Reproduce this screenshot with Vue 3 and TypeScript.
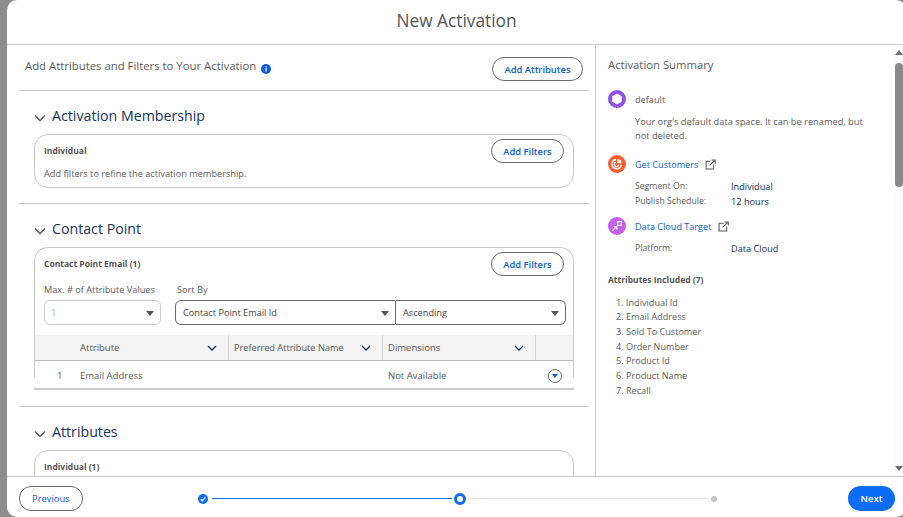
<script setup lang="ts">
const attributes: string[] = [
  'Individual Id',
  'Email Address',
  'Sold To Customer',
  'Order Number',
  'Product Id',
  'Product Name',
  'Recall',
]
</script>

<template>
  <div class="backdrop">
    <div class="modal">
      <header class="modal-header">New Activation</header>

      <div class="modal-body">
        <main class="main">
          <div class="intro">
            <div class="intro-title">
              Add Attributes and Filters to Your Activation
              <svg class="info" viewBox="0 0 10 10" width="10" height="10">
                <circle cx="5" cy="5" r="5" fill="#0b5cd5" />
                <rect x="4.4" y="4.2" width="1.3" height="3.4" fill="#fff" />
                <rect x="4.4" y="2.3" width="1.3" height="1.2" fill="#fff" />
              </svg>
            </div>
            <button class="btn add-attrs">Add Attributes</button>
          </div>

          <section class="section">
            <h2 class="section-title">
              <svg class="chev" viewBox="0 0 12 8" width="12" height="8">
                <path d="M1 1.5 6 6.5 11 1.5" fill="none" stroke="#555" stroke-width="1.3" />
              </svg>
              Activation Membership
            </h2>
            <div class="card">
              <div class="card-head">
                <span class="card-title">Individual</span>
                <button class="btn">Add Filters</button>
              </div>
              <p class="card-note">Add filters to refine the activation membership.</p>
            </div>
          </section>

          <section class="section contact">
            <h2 class="section-title">
              <svg class="chev" viewBox="0 0 12 8" width="12" height="8">
                <path d="M1 1.5 6 6.5 11 1.5" fill="none" stroke="#555" stroke-width="1.3" />
              </svg>
              Contact Point
            </h2>
            <div class="card card-table">
              <div class="card-head">
                <span class="card-title">Contact Point Email (1)</span>
                <button class="btn">Add Filters</button>
              </div>
              <div class="fields">
                <div class="field max-field">
                  <label>Max. # of Attribute Values</label>
                  <div class="select disabled">1<i class="caret"></i></div>
                </div>
                <div class="field sort-field">
                  <label>Sort By</label>
                  <div class="select-pair">
                    <div class="select left">Contact Point Email Id<i class="caret"></i></div>
                    <div class="select right">Ascending<i class="caret"></i></div>
                  </div>
                </div>
              </div>
              <div class="table">
                <div class="thead">
                  <div class="th th-num"></div>
                  <div class="th th-attr">
                    Attribute
                    <svg viewBox="0 0 10 6" width="10" height="6"><path d="M1 1 5 5 9 1" fill="none" stroke="#16325c" stroke-width="1.3" /></svg>
                  </div>
                  <div class="th th-pref">
                    <span class="pref-label">Preferred Attribute Name</span>
                    <svg viewBox="0 0 10 6" width="10" height="6"><path d="M1 1 5 5 9 1" fill="none" stroke="#16325c" stroke-width="1.3" /></svg>
                  </div>
                  <div class="th th-dim">
                    Dimensions
                    <svg viewBox="0 0 10 6" width="10" height="6"><path d="M1 1 5 5 9 1" fill="none" stroke="#16325c" stroke-width="1.3" /></svg>
                  </div>
                  <div class="th th-act"></div>
                </div>
                <div class="tr">
                  <div class="td th-num">1</div>
                  <div class="td th-attr">Email Address</div>
                  <div class="td th-pref"></div>
                  <div class="td th-dim">Not Available</div>
                  <div class="td th-act">
                    <span class="row-menu"><i></i></span>
                  </div>
                </div>
              </div>
            </div>
          </section>

          <section class="section attrs">
            <h2 class="section-title">
              <svg class="chev" viewBox="0 0 12 8" width="12" height="8">
                <path d="M1 1.5 6 6.5 11 1.5" fill="none" stroke="#555" stroke-width="1.3" />
              </svg>
              Attributes
            </h2>
            <div class="card">
              <div class="card-head">
                <span class="card-title">Individual (1)</span>
              </div>
            </div>
          </section>
        </main>

        <aside class="summary">
          <div class="summary-inner">
            <h3 class="summary-title">Activation Summary</h3>

            <div class="item-head">
              <span class="badge purple">
                <svg viewBox="0 0 18 18" width="18" height="18">
                  <path d="M9 3.5 13.8 6.25V11.75L9 14.5 4.2 11.75V6.25Z" fill="#fff" />
                </svg>
              </span>
              <span class="plain">default</span>
            </div>
            <p class="item-text">Your org's default data space. It can be renamed, but not deleted.</p>

            <div class="item-head second">
              <span class="badge orange">
                <svg viewBox="0 0 18 18" width="18" height="18">
                  <path d="M8 4.6a4.6 4.6 0 1 0 5.2 5.4" fill="none" stroke="#fff" stroke-width="1.5" />
                  <path d="M8 7a2.3 2.3 0 1 0 2.8 2.6" fill="none" stroke="#fff" stroke-width="1.2" />
                  <path d="M9.4 4v4.2h4.2A4.3 4.3 0 0 0 9.4 4Z" fill="#fff" />
                </svg>
              </span>
              <a class="link">Get Customers</a>
              <svg class="ext" viewBox="0 0 12 12" width="11" height="11">
                <path d="M6 2.5H1.2v8.3h8.3V6" fill="none" stroke="#555" stroke-width="1.1" />
                <path d="M5 7 10.6 1.4M7.2 1h4v4" fill="none" stroke="#555" stroke-width="1.1" />
              </svg>
            </div>
            <dl class="meta">
              <dt>Segment On:</dt><dd>Individual</dd>
              <dt>Publish Schedule:</dt><dd>12 hours</dd>
            </dl>

            <div class="item-head third">
              <span class="badge violet">
                <svg viewBox="0 0 18 18" width="18" height="18">
                  <rect x="9.6" y="4.6" width="3.8" height="3.8" fill="none" stroke="#fff" stroke-width="1.2" />
                  <path d="M4.4 13.6 8.6 9.4M5.8 9.6h3v3" fill="none" stroke="#fff" stroke-width="1.3" />
                </svg>
              </span>
              <a class="link">Data Cloud Target</a>
              <svg class="ext" viewBox="0 0 12 12" width="11" height="11">
                <path d="M6 2.5H1.2v8.3h8.3V6" fill="none" stroke="#555" stroke-width="1.1" />
                <path d="M5 7 10.6 1.4M7.2 1h4v4" fill="none" stroke="#555" stroke-width="1.1" />
              </svg>
            </div>
            <dl class="meta">
              <dt>Platform:</dt><dd>Data Cloud</dd>
            </dl>

            <h4 class="included">Attributes Included (7)</h4>
            <ol class="attr-list">
              <li v-for="name in attributes" :key="name">{{ name }}</li>
            </ol>
          </div>
          <div class="scrollbar">
            <i class="arrow up"></i>
            <div class="thumb"></div>
            <i class="arrow down"></i>
          </div>
        </aside>
      </div>

      <footer class="modal-footer">
        <button class="btn prev">Previous</button>
        <div class="progress">
          <span class="step done">
            <svg viewBox="0 0 10 10" width="10" height="10">
              <circle cx="5" cy="5" r="5" fill="#0b6cf5" />
              <path d="M2.7 5.2 4.3 6.8 7.4 3.6" fill="none" stroke="#fff" stroke-width="1.4" />
            </svg>
          </span>
          <span class="line active"></span>
          <span class="step current"></span>
          <span class="line"></span>
          <span class="step todo"></span>
        </div>
        <button class="next">Next</button>
      </footer>
    </div>
  </div>
</template>

<style>
html,
body {
  margin: 0;
  background: #8e8e8e;
}
</style>

<style scoped>
.backdrop {
  width: 903px;
  height: 517px;
  padding-left: 7px;
  box-sizing: border-box;
  background: #8e8e8e;
  overflow: hidden;
  font-family: "Open Sans", "Noto Sans", sans-serif;
  font-size: 9.5px;
  color: #5c5c5c;
}

/* runs a little past the right edge of the window, like the real dialog */
.modal {
  width: 899px;
  height: 517px;
  background: #fff;
  border-radius: 10px;
  display: flex;
  flex-direction: column;
  overflow: hidden;
}

.modal-header {
  height: 45px;
  flex: none;
  box-sizing: border-box;
  border-bottom: 1px solid #c9c9c9;
  text-align: center;
  font-size: 17.3px;
  line-height: 42px;
  color: #555;
}

.modal-body {
  flex: 1;
  min-height: 0;
  display: flex;
}

.main {
  width: 589px;
  flex: none;
  box-sizing: border-box;
  padding: 0 6px 0 12px;
  border-right: 1px solid #c9c9c9;
  overflow: hidden;
}

.intro {
  height: 46px;
  display: flex;
  align-items: flex-start;
  justify-content: space-between;
  padding: 12px 6px 0;
  box-sizing: border-box;
  border-bottom: 1px solid #c9c9c9;
}

.intro-title {
  font-size: 11.35px;
  line-height: 17px;
  color: #5c5c5c;
}

.info {
  margin-left: 2px;
  vertical-align: -4px;
}

.btn {
  height: 24px;
  padding: 0 11.5px;
  border: 1px solid #6b6b6b;
  border-radius: 12px;
  background: #fff;
  color: #0b5cd5;
  font: 600 9.4px "Open Sans", "Noto Sans", sans-serif;
}

.section {
  padding: 15px 15px 0;
  height: 113px;
  box-sizing: border-box;
  border-bottom: 1px solid #c9c9c9;
}

.section.contact {
  height: 203px;
}

.section.attrs {
  border-bottom: 0;
}

.section-title {
  margin: 0 0 8px;
  font-size: 14.2px;
  font-weight: 400;
  line-height: 20px;
  color: #16325c;
  display: flex;
  align-items: center;
  gap: 6px;
}

.chev {
  margin-top: 3px;
}

.card {
  border: 1px solid #c9c9c9;
  border-radius: 14px;
  padding: 4px 9px 0;
  height: 54px;
  box-sizing: border-box;
}

.card-table {
  height: 143px;
  padding: 4px 0 0;
  border-radius: 14px 14px 0 0;
  border-bottom: 2px solid #c9c9c9;
}

.card-table .card-head {
  padding: 0 9px;
}

.card-head {
  display: flex;
  align-items: flex-start;
  justify-content: space-between;
}

.card-title {
  font-weight: 700;
  font-size: 8.5px;
  line-height: 24px;
  color: #555;
}

.card-note {
  margin: 3px 0 0;
  font-size: 9.2px;
  line-height: 16px;
}

.fields {
  display: flex;
  gap: 14px;
  padding: 0 7px 0 9px;
  margin-top: 7px;
}

.field label {
  display: block;
  font-size: 9.2px;
  line-height: 14px;
  margin-bottom: 3px;
}

.sort-field label {
  padding-left: 2px;
}

.max-field {
  width: 117px;
  flex: none;
}

.sort-field {
  flex: 1;
}

.select-pair {
  display: flex;
}

.select {
  position: relative;
  height: 25px;
  box-sizing: border-box;
  border: 1px solid #6b6b6b;
  border-radius: 6px;
  line-height: 23px;
  padding-left: 7px;
  font-size: 9.2px;
  color: #444;
}

.select.disabled {
  border-color: #c9c9c9;
  color: #b0b0b0;
  padding-left: 6px;
}

.select.left {
  width: 221px;
  border-radius: 6px 0 0 6px;
}

.select.right {
  flex: 1;
  border-left: 0;
  border-radius: 0 6px 6px 0;
}

.caret {
  position: absolute;
  right: 6px;
  top: 10px;
  border-left: 4px solid transparent;
  border-right: 4px solid transparent;
  border-top: 5px solid #555;
}

.table {
  margin-top: 10px;
  font-size: 9.5px;
}

.thead {
  display: flex;
  height: 26px;
  background: #f3f3f3;
  border-bottom: 1px solid #bcbcbc;
  box-sizing: border-box;
  color: #555;
}

.th {
  display: flex;
  align-items: center;
  justify-content: space-between;
  box-sizing: border-box;
  padding: 0 11px 0 5px;
  border-right: 1px solid #d0d0d0;
}

.th svg {
  flex: none;
}

.pref-label {
  font-size: 9.2px;
  white-space: nowrap;
}

.th-num {
  width: 40px;
  border-right: 0;
  padding: 0;
}

.th-attr {
  width: 154px;
}

.th-pref {
  width: 154px;
}

.th-dim {
  width: 153px;
}

.th-act {
  flex: 1;
  border-right: 0;
}

.tr {
  position: relative;
  display: flex;
  height: 27px;
  box-sizing: border-box;
  padding-top: 2px;
  align-items: center;
}

/* the row hides the lower part of the card's side borders */
.tr::before,
.tr::after {
  content: "";
  position: absolute;
  bottom: 0;
  width: 1px;
  height: 10px;
  background: #fff;
}

.tr::before {
  left: -1px;
}

.tr::after {
  right: -1px;
}

.td {
  box-sizing: border-box;
  padding: 0 5px;
}

.td.th-num {
  padding-left: 22px;
}

.td.th-act {
  padding-left: 12px;
}

.row-menu {
  display: flex;
  align-items: center;
  justify-content: center;
  width: 14px;
  height: 14px;
  box-sizing: border-box;
  border: 1px solid #6b6b6b;
  border-radius: 50%;
}

.row-menu i {
  border-left: 3.5px solid transparent;
  border-right: 3.5px solid transparent;
  border-top: 4px solid #0b5cd5;
}

.summary {
  flex: 1;
  display: flex;
  min-width: 0;
  padding-right: 3px;
}

.summary-inner {
  flex: 1;
  padding: 12px 0 0 12px;
  min-width: 0;
}

.summary-title {
  margin: 0 0 18px;
  font-size: 11.3px;
  font-weight: 400;
  line-height: 15px;
  color: #5c5c5c;
}

.item-head {
  display: flex;
  align-items: center;
  height: 18px;
  gap: 9px;
}

.item-head.second {
  margin-top: 12px;
}

.item-head.third {
  margin-top: 8px;
}

.badge {
  width: 18px;
  height: 18px;
  border-radius: 50%;
  display: flex;
}

.purple {
  background: #9050e9;
}

.orange {
  background: #fe5c2a;
}

.violet {
  background: #c65ff0;
}

.plain {
  font-size: 9.2px;
}

.item-text {
  margin: 7px 0 0 27px;
  width: 240px;
  line-height: 14px;
  font-size: 9.25px;
}

.link {
  color: #0b5cd5;
  font-size: 9.1px;
}

.ext {
  margin-left: -2px;
}

.meta {
  margin: 6px 0 0 27px;
  display: grid;
  grid-template-columns: 96px 1fr;
  line-height: 15px;
}

.meta dt {
  font-size: 8.7px;
}

.meta dd {
  margin: 0;
  color: #16325c;
  font-size: 9.2px;
}

.included {
  margin: 17px 0 0;
  font-size: 8.5px;
  line-height: 14px;
  font-weight: 700;
  color: #555;
}

.attr-list {
  margin: 8.5px 0 0;
  padding: 0 0 0 18px;
  line-height: 14.7px;
  font-size: 9.1px;
}

.scrollbar {
  width: 8px;
  flex: none;
  display: flex;
  flex-direction: column;
  align-items: center;
  background: #fafafa;
}

.thumb {
  width: 8px;
  height: 124px;
  margin-top: 8px;
  border-radius: 4px;
  background: #8a8a8a;
}

.arrow {
  border-left: 4px solid transparent;
  border-right: 4px solid transparent;
}

.arrow.up {
  margin-top: 5px;
  border-bottom: 5px solid #6e6e6e;
}

.arrow.down {
  margin-top: auto;
  margin-bottom: 5px;
  border-top: 5px solid #6e6e6e;
}

.modal-footer {
  flex: none;
  height: 41px;
  box-sizing: border-box;
  border-top: 1px solid #c9c9c9;
  display: flex;
  align-items: center;
  justify-content: space-between;
  padding: 3px 11px 0 12px;
}

.prev {
  height: 25px;
  padding: 0 12px;
  font-weight: 400;
}

.next {
  width: 47px;
  height: 25px;
  border: 0;
  border-radius: 13px;
  background: #0b6cf5;
  color: #fff;
  font: 600 9.5px "Open Sans", "Noto Sans", sans-serif;
}

.progress {
  width: 519px;
  margin-right: 16px;
  display: flex;
  align-items: center;
}

.step {
  flex: none;
  display: flex;
}

.current {
  width: 12px;
  height: 12px;
  box-sizing: border-box;
  border: 3px solid #0b6cf5;
  border-radius: 50%;
}

.todo {
  width: 6px;
  height: 6px;
  border-radius: 50%;
  background: #c4c4c4;
}

.line {
  flex: 1;
  height: 1px;
  margin: 0 3px 0 4px;
  background: #e2e2e2;
}

.line.active {
  flex: none;
  width: 240px;
  height: 1.5px;
  margin: 0 2px 0 4px;
  background: #0b6cf5;
}
</style>
